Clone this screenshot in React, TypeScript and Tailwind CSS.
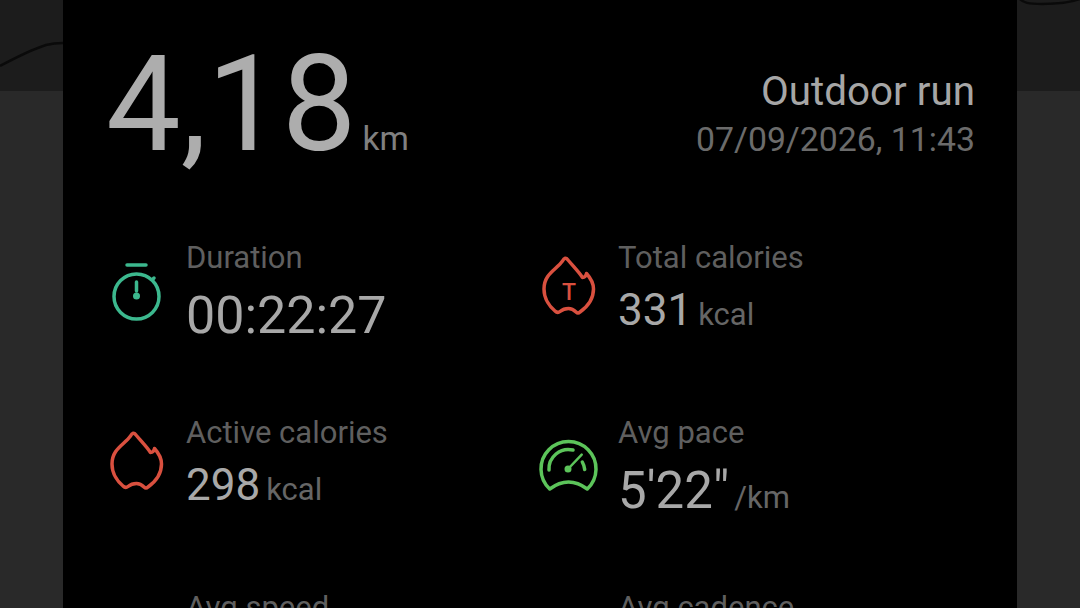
const flamePath =
  "M22.500 7Q25 2 28 6C33 12 39 18 42.500 23.500C44.500 23.500 46 22 46.500 19.500C50.500 24 53.500 28 53.500 35C53.500 45 47 53 40 58Q38 60 36 58C34 56 32 54.500 28.500 54.500C25 54.500 23 55 20 57.500Q17.500 59.500 15 57C10 53 4 45 4 35C4 20 16 16 22.500 7Z";

function StopwatchIcon() {
  return (
    <svg className="mt-[18px]" width="56" height="64" viewBox="0 0 56 64" fill="none" stroke="#3cb88e" strokeWidth="3.500" strokeLinecap="round">
      <path d="M19 7H38" />
      <circle cx="28.500" cy="38.500" r="22.500" />
      <path d="M28.500 24V33" />
      <circle cx="28.500" cy="38" r="3.500" fill="#3cb88e" stroke="none" />
      <path d="M45 21L46 20" />
    </svg>
  );
}

function FlameIcon({ withT }: { withT?: boolean }) {
  return (
    <svg className="mt-[14px]" width="58" height="64" viewBox="0 0 58 64" fill="none" stroke="#d9503f" strokeWidth="3.500" strokeLinejoin="round">
      <path d={flamePath} />
      {withT && (
        <text x="29" y="46" textAnchor="middle" fontFamily="Roboto, sans-serif" fontSize="23" fontWeight="500" fill="#d9503f" stroke="none">
          T
        </text>
      )}
    </svg>
  );
}

function GaugeIcon() {
  return (
    <svg className="mt-[21px] -ml-[3px]" width="62" height="58" viewBox="0 0 62 58" fill="none" stroke="#5cc45a" strokeWidth="3.500" strokeLinecap="round">
      <path d="M12.700 53A27.500 27.500 0 1 1 50.300 53Q31.500 39 12.700 53Z" strokeLinejoin="round" />
      <path d="M12 34A19.500 19.500 0 0 1 36 14" />
      <path d="M47.700 33.500A19.500 19.500 0 0 0 45.300 26" />
      <circle cx="31" cy="33" r="3.500" fill="#5cc45a" stroke="none" />
      <path d="M31 33L44.700 18.600" strokeWidth="2.500" />
    </svg>
  );
}

function Stat({
  icon,
  label,
  value,
  unit,
  valueClass,
  unitClass,
}: {
  icon?: React.ReactNode;
  label: string;
  value?: string;
  unit?: string;
  valueClass?: string;
  unitClass?: string;
}) {
  return (
    <div className="flex">
      <div className="w-[78px] shrink-0">{icon}</div>
      <div>
        <div className="text-[31px] leading-[36px] text-[#5f5f5f]">{label}</div>
        {value && (
          <div className={`text-[#a8a8a8] ${valueClass}`}>
            {value}
            {unit && <span className={`text-[31px] text-[#666666] ${unitClass}`}>{unit}</span>}
          </div>
        )}
      </div>
    </div>
  );
}

export default function App() {
  return (
    <div className="flex h-[608px] w-[1080px] overflow-hidden bg-[#292929] font-[Roboto,sans-serif]">
      {/* Map showing behind the sheet */}
      <div className="w-[63px] shrink-0">
        <div className="h-[91px] bg-[#1c1c1c]">
          <svg width="63" height="91" viewBox="0 0 63 91" fill="none">
            <path d="M0 66C15 58 30 50 46 45C52 43.500 58 43 63 43" stroke="#0a0a0a" strokeWidth="2.500" />
          </svg>
        </div>
      </div>

      <main className="min-w-0 flex-1 bg-black pl-[45px] pr-[42px]">
        <div className="flex h-[240px] items-start justify-between">
          <div className="-ml-[2px] mt-[25px] flex items-baseline">
            <span className="text-[133px] leading-[160px] text-[#adadad]">4,18</span>
            <span className="ml-[6px] text-[33.500px] leading-none text-[#808080]">km</span>
          </div>
          <div className="mt-[70px] text-right">
            <div className="text-[40.400px] leading-[44px] text-[#a6a6a6]">Outdoor run</div>
            <div className="mt-[6px] text-[33.800px] leading-[40px] text-[#6b6b6b]">07/09/2026, 11:43</div>
          </div>
        </div>

        <div className="grid grid-cols-[432px_1fr] auto-rows-[175px]">
          <Stat icon={<StopwatchIcon />} label="Duration" value="00:22:27" valueClass="mt-[10px] text-[52px] leading-[60px]" />
          <Stat icon={<FlameIcon withT />} label="Total calories" value="331" unit="kcal" valueClass="mt-[9px] text-[44px] leading-[50px]" unitClass="ml-[6px]" />
          <Stat icon={<FlameIcon />} label="Active calories" value="298" unit="kcal" valueClass="mt-[9px] text-[44px] leading-[50px]" unitClass="ml-[6px]" />
          <Stat icon={<GaugeIcon />} label="Avg pace" value={"5'22\""} unit="/km" valueClass="mt-[10px] text-[51px] leading-[60px]" unitClass="ml-[5px]" />
          <Stat label="Avg speed" />
          <Stat label="Avg cadence" />
        </div>
      </main>

      <div className="w-[63px] shrink-0">
        <div className="h-[91px] bg-[#1c1c1c]">
          <svg width="63" height="91" viewBox="0 0 63 91" fill="none">
            <path d="M2 -2C6 3 12 4 25 4C38 4 52 3 63 -1" stroke="#0a0a0a" strokeWidth="2.500" />
          </svg>
        </div>
      </div>
    </div>
  );
}
